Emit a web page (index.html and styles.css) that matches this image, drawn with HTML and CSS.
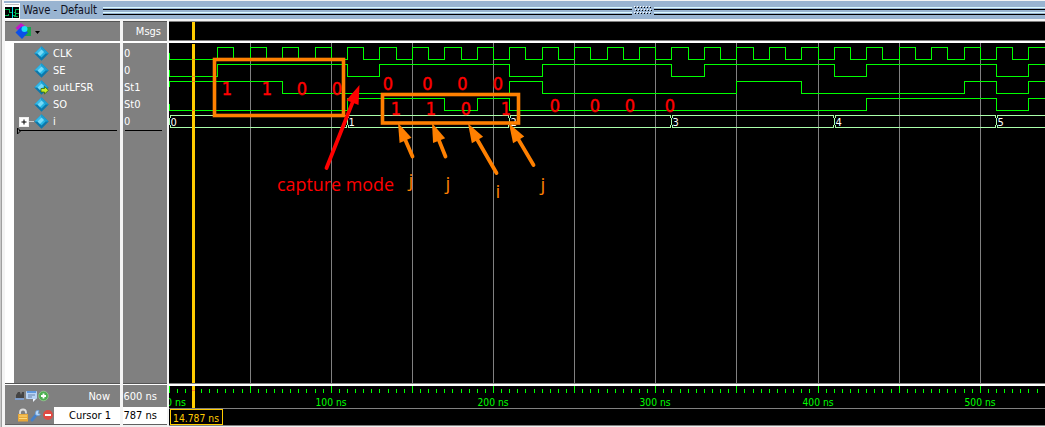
FILE: index.html
```html
<!DOCTYPE html>
<html lang="en">
<head>
<meta charset="utf-8">
<title>Wave - Default</title>
<link rel="stylesheet" href="styles.css">
</head>
<body>
<svg class="defs" width="0" height="0">
  <defs>
    <symbol id="signal" viewBox="0 0 15 15">
      <path d="M7.5 0.3 14.7 7.5 7.5 14.7 0.3 7.5Z" fill="#0b78ac"/>
      <path d="M7.5 0.3 0.3 7.5 4 7.5 7.5 4Z" fill="#35b9e8"/>
      <path d="M7.5 .3 14.7 7.5 11 7.5 7.5 4Z" fill="#1da0d2"/>
      <path d="M7.5 3.5 11.5 7.5 7.5 11.5 3.5 7.5Z" fill="#24b4e4"/>
      <path d="M7.5 3.5 10 6 6 10 3.5 7.5Z" fill="#74daf8"/>
    </symbol>
  </defs>
</svg>
<div class="window">
  <div class="titlebar">
    <svg class="app-icon" width="16" height="16" viewBox="0 0 16 16" shape-rendering="crispEdges">
      <rect width="16" height="16" fill="#fff"/><path d="M1 1h14v1H1z" fill="#bbb"/><rect x="1" y="4" width="14" height="11" fill="#000"/>
      <path d="M1 6.5h4v3h3M10 9.5h1v-3h4M1 12.5h3v-2M9 12.5h2v-2h4M10 13.5h4" fill="none" stroke="#00b050"/>
      <path d="M8.500 4v11" stroke="#00e5ef"/>
    </svg>
    <svg class="title-text" width="80" height="18"><text class="ui title" x="3" y="13" textLength="74" lengthAdjust="spacingAndGlyphs">Wave - Default</text></svg>
    <div class="grip-line"></div>
    <svg class="grip" width="22" height="10" shape-rendering="crispEdges">
      <path d="M2 1.5h17M3 4.5h17M2 7.5h17" stroke="#fff" stroke-dasharray="1 2"/>
      <path d="M3 2.5h17M4 5.5h17M3 8.5h17" stroke="#000" stroke-dasharray="1 2"/>
    </svg>
    <div class="grip-line"></div>
  </div>
  <div class="body">
    <div class="names">
      <div class="head">
        <svg width="40" height="18" viewBox="14 22 40 18">
          <path d="M24 27h7v9h-7z" fill="#18a34d"/><path d="M15.5 28 21 23 25 26 19 31Z" fill="#c414c8"/>
          <path d="M21.500 26.500 28 32.500 22 39 15.500 32.500Z" fill="#0b50e8"/><circle cx="24.500" cy="29" r="3" fill="#19dff5"/>
          <path d="M35 31h5l-2.500 3z" fill="#000"/>
        </svg>
      </div>
      <div class="tree">
        <div class="row"><svg class="dot"><use href="#signal"/></svg><span>CLK</span></div>
        <div class="row"><svg class="dot"><use href="#signal"/></svg><span>SE</span></div>
        <div class="row"><svg class="dot"><use href="#signal"/><path d="M7 8.500h3.500v-2l4 3.800-4 3.700v-2H7z" fill="#c8ef24" stroke="#376b12" stroke-width=".8"/></svg><span>outLFSR</span></div>
        <div class="row"><svg class="dot"><use href="#signal"/></svg><span>SO</span></div>
        <div class="row bus"><svg class="plus" width="15" height="15"><path d="M10 7.500h5" stroke="#ccc"/><rect x=".5" y="3.500" width="9" height="9" fill="#fff" stroke="#eee"/><path d="M2.500 8h5M5 5.500v5" stroke="#000"/></svg><svg class="dot"><use href="#signal"/></svg><span>i</span></div>
        <svg class="end" width="104" height="8"><path d="M2.500 1v6l3-3z" fill="none" stroke="#000"/><path d="M4 3.500h98" stroke="#000"/></svg>
      </div>
      <div class="foot">
        <div class="now">
          <svg width="38" height="14" viewBox="14 390 38 14">
            <path d="M16 399v-3l2-3h2l1 3 1-3h2v6z" fill="#444"/><path d="M15 400h9" stroke="#7ba5e0" stroke-width="1.500"/>
            <rect x="26" y="392" width="11" height="8" rx="1" fill="#b9d4f5"/><path d="M27 393h9" stroke="#5f99df" stroke-width="2"/><path d="M28 396h7M28 398h4" stroke="#6683aa"/><path d="M33 400v3l3-3z" fill="#eef5ff"/>
            <circle cx="43.500" cy="397" r="4.800" fill="#4caf50" stroke="#a7d9a0" stroke-width=".6"/><path d="M41 397h5M43.500 394.500v5" stroke="#fff" stroke-width="1.800"/>
          </svg><span>Now</span>
        </div>
        <div class="cursor">
          <svg width="49" height="17" viewBox="5 408 49 17">
            <path d="M20 416v-2.500a3 3 0 0 1 6 0v1" fill="none" stroke="#ddd" stroke-width="1.800"/><rect x="18" y="415" width="10" height="7.500" fill="#e7a83a"/><path d="M19 417h8M19 419.500h8" stroke="#ffdb7a"/>
            <path d="m32 421 5-6" stroke="#4680c8" stroke-width="3" stroke-linecap="round"/><path d="M39 411.500a2.700 2.700 0 1 0 1.500 3.500l-2.200-.4z" fill="#b4d7fb" stroke="#6398d4" stroke-width=".7"/>
            <circle cx="48" cy="416" r="5" fill="#e04a43"/><path d="M45 416h6" stroke="#fff" stroke-width="2"/>
          </svg><span>Cursor 1</span>
        </div>
        <div class="bottom"></div>
      </div>
    </div>
    <div class="values">
      <div class="head"><span>Msgs</span></div>
      <div class="list">
        <div class="row">0</div><div class="row">0</div><div class="row">St1</div><div class="row">St0</div><div class="row">0</div>
        <div class="rule"></div>
      </div>
      <div class="foot">
        <div class="now"><span>7600 ns</span></div>
        <div class="cursor"><span>787 ns</span></div>
        <div class="bottom"></div>
      </div>
    </div>
    <svg class="waves" id="waves" width="876" height="406" viewBox="169 21 876 406">
      <g shape-rendering="crispEdges">
        <rect x="169" y="21" width="876" height="406" fill="#000"/>
        <path d="M169 21.500h876M169 40.500h876M169 383.500h876M169 408.500h876M169 425.500h876" stroke="#808080"/>
        <path d="M169 42h876M169 385h876" stroke="#fff" stroke-width="2"/>
        <path d="M169 426.500h876" stroke="#f0f0f0"/>
        <g id="grid"></g>
        <g id="signals"></g>
      </g>
      <g id="labels"></g>
      <g shape-rendering="crispEdges">
        <path d="M193.500 22v18M193.500 44v339M193.500 386v22" stroke="#fc0" stroke-width="3"/>
        <path d="M192 59.500h3M192 76.500h3M192 81.500h3M192 110.500h3M192 390.500h3" stroke="#ff7a20"/>
        <rect x="170.500" y="409.500" width="52" height="15" fill="#000" stroke="#fc0"/>
      </g>
      <text class="ui time" x="173" y="422" textLength="46" lengthAdjust="spacingAndGlyphs">14.787 ns</text>
      <g class="digits">
        <text x="227" y="95">1</text><text x="267" y="95">1</text><text x="302" y="95">0</text><text x="337" y="95">0</text>
        <text x="388" y="90">0</text><text x="427.500" y="90">0</text><text x="462.500" y="90">0</text><text x="498" y="90">0</text>
        <text x="396" y="115">1</text><text x="431" y="115">1</text><text x="466" y="115">0</text><text x="506" y="115">1</text>
        <text x="555" y="112">0</text><text x="595" y="112">0</text><text x="630" y="112">0</text><text x="670" y="112">0</text>
      </g>
      <text class="note" x="277" y="191" textLength="117" lengthAdjust="spacingAndGlyphs">capture mode</text>
      <g class="letters"><text x="411" y="187">j</text><text x="448" y="190">j</text><text x="498" y="198">i</text><text x="543" y="191">j</text></g>
      <g fill="none" stroke="#ff8000">
        <rect x="214.500" y="59.500" width="129" height="56" stroke-width="3.600"/>
        <rect x="382.500" y="94.500" width="136" height="28.500" stroke-width="3.600"/>
      </g>
      <g id="arrows"></g>
    </svg>
  </div>
</div>
<script src="wave.js"></script>
</body>
</html>
```
FILE: styles.css
```css
* { box-sizing: border-box; }
body { margin: 0; overflow: hidden; background: #f0f0f0; }
body, .ui { font-family: "DejaVu Sans Condensed", "DejaVu Sans", sans-serif; font-stretch: condensed; font-size: 11px; }
.defs { display: block; height: 0; }
.window { width: 1045px; height: 427px; padding: 1px 0 0 4px; background: linear-gradient(90deg, #c9c9c9 0 1px, #a0a0a0 1px 2px, #f4f4f4 2px 100%); }
.titlebar { height: 18px; display: flex; align-items: center; background: #99b4d1; }
.app-icon { flex: none; margin: 1px 0 0; }
.title-text { flex: none; }
.title { font-size: 12px; fill: #101020; }
.grip-line { height: 10px; background: linear-gradient(#99b4d1 0 2px, #dcfaff 2px 3px, #99b4d1 3px 4px, #000 4px 5px, #99b4d1 5px 7px, #dcfaff 7px 8px, #99b4d1 8px 9px, #000 9px); flex: 1; }
.grip-line:nth-child(3) { flex: 0 0 529px; margin-left: 3px; }
.grip { flex: none; }
.body { display: grid; grid-template-columns: 116px 3px 44px 2px 876px; height: 406px; margin-top: 2px; }
.names, .values { display: flex; flex-direction: column; height: 406px; background: #808080; color: #fff; line-height: 17px; overflow: hidden; }
.names { margin-left: 1px; }
.values { grid-column: 3; }
.waves { grid-column: 5; display: block; }
.head { height: 22px; flex: none; border-top: 1px solid #555; border-bottom: 2px solid #fff; }
.names .head { padding-left: 9px; }
.values .head { text-align: right; padding: 1px 6px 0 0; }
.tree, .list { height: 341px; padding-top: 2px; }
.tree { border-left: 9px solid #fff; }
.row { height: 17px; display: flex; align-items: center; }
.tree .row { padding-left: 20px; }
.tree .bus { padding-left: 5px; }
.dot { width: 15px; height: 15px; margin-right: 4px; flex: none; }
.list .row { padding-left: 1px; }
.end { display: block; margin-left: 1px; margin-top: -3px; }
.rule { width: 37px; height: 1px; margin-left: 2px; background: #000; }
.foot { border-top: 1px solid #555; }
.foot::before { content: ""; display: block; height: 1px; background: #fff; }
.now { height: 22px; display: flex; align-items: center; justify-content: space-between; }
.names .now { padding: 0 10px 0 9px; }
.cursor { height: 17px; display: flex; align-items: center; justify-content: space-between; background: #fff; color: #000; }
.names .cursor svg { flex: none; background: #808080; }
.names .cursor { padding-right: 9px; }
.values .now, .values .cursor { justify-content: flex-end; padding-right: 10px; }
.values .now span, .values .cursor span { white-space: nowrap; }
.bottom { height: 3px; border-top: 1px solid #606060; background: #f0f0f0; }
.time { fill: #fc0; }
.scale { fill: #00ff00; text-anchor: middle; }
.bus-value { fill: #fff; }
.digits { font: 18px "DejaVu Sans Condensed", "DejaVu Sans", sans-serif; fill: #f00; stroke: #f00; stroke-width: 0.4px; text-anchor: middle; }
.note { font: 18px "Open Sans", sans-serif; fill: #f00; }
.letters { font: 19px "Open Sans", sans-serif; fill: #ff8000; text-anchor: middle; }
```
FILE: wave.js
```js
const NS = "http://www.w3.org/2000/svg";
const END = 1045;
const xAt = t => Math.floor(169 + 1.6225 * t);

function add(parent, tag, attrs, text) {
  const el = document.createElementNS(NS, tag);
  for (const key in attrs) el.setAttribute(key, attrs[key]);
  if (text) el.textContent = text;
  document.getElementById(parent).appendChild(el);
}

for (let t = 0; t < 540; t += 5) {
  const x = xAt(t) + 0.5;
  const major = t % 50 === 0;
  if (major && t) add("grid", "path", { d: `M${x} 43V383`, stroke: "#808080" });
  add("grid", "path", { d: `M${x} ${major ? 386 : 389}V393`, stroke: "#0f0" });
}
for (let t = 0; t <= 500; t += 100) {
  add("labels", "text", { class: "ui scale", x: xAt(t) + (t ? 0 : 7), y: 406, textLength: t ? 31 : 20, lengthAdjust: "spacingAndGlyphs" }, t + " ns");
}

function signal(high, low, level, edges) {
  const ys = [low + 0.5, high + 0.5];
  let d = `M169.5 ${(high + low) / 2}V${ys[level]}`;
  for (const t of edges) {
    const x = xAt(t) + 0.5;
    if (x > END) break;
    level = 1 - level;
    d += `H${x}V${ys[level]}`;
  }
  add("signals", "path", { d: d + "H" + END, fill: "none", stroke: "#0f0" });
}

const clock = [];
for (let t = 30; t < 545; t += 10) clock.push(t);
signal(47, 59, 0, clock);
signal(64, 76, 0, [30, 110, 130, 210, 230, 310, 330, 410, 430, 510, 530]);
signal(81, 93, 1, [70, 210, 230, 350, 390, 490, 510, 530]);
signal(98, 110, 0, [110, 170, 190, 210, 430, 510, 530]);

const changes = [0, 110, 210, 310, 410, 510];
changes.forEach((t, n) => {
  const x = xAt(t) + 0.5;
  const end = n < 5 ? xAt(changes[n + 1]) - 0.5 : END;
  add("signals", "path", {
    d: `M${end} 118V115.5H${x + 1}V118M${x} 118V125M${x + 1} 125V127.5H${end}V125`,
    fill: "none", stroke: "#aaffaa"
  });
  add("labels", "text", { class: "ui bus-value", x: x + 1, y: 126 }, String(n));
});

function arrow(x1, y1, x2, y2, color, length, half) {
  const len = Math.hypot(x2 - x1, y2 - y1);
  const ux = (x2 - x1) / len, uy = (y2 - y1) / len;
  const bx = x2 - ux * length, by = y2 - uy * length;
  add("arrows", "path", { d: `M${x1} ${y1}L${bx} ${by}`, stroke: color, "stroke-width": 3.8, "stroke-linecap": "round" });
  add("arrows", "path", { d: `M${x2} ${y2}L${bx - uy * half} ${by + ux * half}L${bx + uy * half} ${by - ux * half}Z`, fill: color });
}
arrow(326.5, 168, 359.5, 85, "#f00", 19, 6.5);
arrow(412.5, 156.5, 398, 123, "#ff8000", 19, 6.5);
arrow(445.5, 156.5, 432, 123, "#ff8000", 19, 6.5);
arrow(496.5, 173, 468, 123.5, "#ff8000", 19, 6.5);
arrow(533.5, 165, 509, 123.5, "#ff8000", 19, 6.5);
```
